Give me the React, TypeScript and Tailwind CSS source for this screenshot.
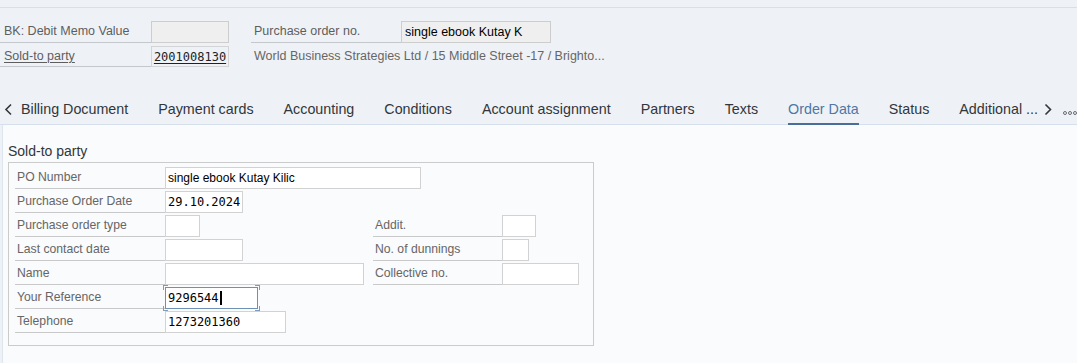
import React from "react";

const sans = { fontFamily: '"Liberation Sans", Arial, sans-serif' };
const mono = { fontFamily: '"DejaVu Sans Mono", "Liberation Mono", monospace' };

function HeaderLabel({ children, w, link, pl }: { children: React.ReactNode; w: string; link?: boolean; pl?: string }) {
  return (
    <div className={`${w} h-full border-b border-[#c4c8cc] flex items-center ${pl ?? "pl-[4px]"} text-[12.5px] text-[#5e5e5e] whitespace-nowrap`}>
      <span className={link ? "underline underline-offset-2" : ""}>{children}</span>
    </div>
  );
}

function FLabel({ children, w }: { children: React.ReactNode; w: string }) {
  return (
    <div className={`${w} h-full border-b border-[#c9c9c9] flex items-center pl-[2px] text-[12.2px] text-[#666666] whitespace-nowrap`}>
      {children}
    </div>
  );
}

function FInput({ w, children, isMono }: { w: string; children?: React.ReactNode; isMono?: boolean }) {
  return (
    <div
      className={`${w} h-full border border-[#d2d2d2] bg-white flex items-center px-[2px] text-[12px] text-black whitespace-nowrap overflow-hidden`}
      style={isMono ? mono : undefined}
    >
      {children}
    </div>
  );
}

function Corner({ cls }: { cls: string }) {
  return <span className={`absolute w-[5px] h-[5px] border-[#7e9bbb] ${cls}`} />;
}

const tabs = [
  "Billing Document",
  "Payment cards",
  "Accounting",
  "Conditions",
  "Account assignment",
  "Partners",
  "Texts",
  "Order Data",
  "Status",
  "Additional ...",
];

export default function App() {
  return (
    <div className="w-[1077px] h-[363px] overflow-hidden bg-[#eef2f7] flex flex-col" style={sans}>
      {/* top */}
      <div className="h-[7px]" />
      <div className="border-t border-[#d7dfe8] pt-[13px] pl-0">
        <div className="flex h-[22px]">
          <HeaderLabel w="w-[151px]">BK: Debit Memo Value</HeaderLabel>
          <div className="w-[78px] h-full border border-[#cdcdcd] bg-[#efefef]" />
          <div className="ml-[22px] flex h-full">
            <HeaderLabel w="w-[150px]" pl="pl-[3px]">Purchase order no.</HeaderLabel>
            <div className="w-[150px] h-full border border-[#cdcdcd] bg-[#efefef] flex items-center px-[3px] text-[12.5px] text-black">
              single ebook Kutay K
            </div>
          </div>
        </div>
        <div className="flex h-[21px] mt-[3px]">
          <HeaderLabel w="w-[151px]" link>Sold-to party</HeaderLabel>
          <div
            className="w-[78px] h-full border border-[#d4d4d4] bg-[#eef2f7] flex items-center justify-center text-[12px] text-[#222] underline underline-offset-2"
            style={mono}
          >
            2001008130
          </div>
          <div className="ml-[25px] flex items-center text-[12.5px] text-[#666666] whitespace-nowrap">
            World Business Strategies Ltd / 15 Middle Street -17 / Brighto...
          </div>
        </div>
      </div>

      {/* tabs */}
      <div className="mt-[28px] h-[30px] border-b border-[#d5e0ec] flex items-stretch text-[14.3px] text-[#32363a] whitespace-nowrap">
        <div className="w-[22px] flex items-center pl-[4px]">
          <svg width="9" height="13" viewBox="0 0 9 13">
            <polyline points="7,1.5 2,6.5 7,11.5" fill="none" stroke="#32363a" strokeWidth="1.6" />
          </svg>
        </div>
        <div className="flex items-stretch gap-[30px]">
          {tabs.map((t) =>
            t === "Order Data" ? (
              <div key={t} className="flex items-center border-b-2 border-[#4a6e9a] -mb-px pt-[1px] text-[#4f77a4]">
                {t}
              </div>
            ) : (
              <div key={t} className="flex items-center">
                {t}
              </div>
            )
          )}
        </div>
        <div className="flex items-center ml-[6px]">
          <svg width="8" height="13" viewBox="0 0 8 13">
            <polyline points="1.5,1.5 6.5,6.5 1.5,11.5" fill="none" stroke="#32363a" strokeWidth="1.6" />
          </svg>
        </div>
        <div className="flex items-center ml-[11px] pt-[6px] gap-[1px]">
          {[0, 1, 2].map((i) => (
            <span key={i} className="w-[4px] h-[4px] rounded-full border border-[#6a6d70]" />
          ))}
        </div>
      </div>

      {/* content */}
      <div className="flex-1 ml-[2px] border-l border-[#dde5ee] bg-[#f9fbfd] pt-[18px] pl-[5px]">
        <div className="h-[17px] flex items-center text-[14px] text-[#32363a]">Sold-to party</div>
        <div className="mt-[2px] w-[586px] h-[184px] border border-[#cbcbcb] pt-[4px] pl-[6px] flex flex-col gap-[2px]">
          <div className="flex h-[22px]">
            <FLabel w="w-[150px]">PO Number</FLabel>
            <FInput w="w-[256px]">single ebook Kutay Kilic</FInput>
          </div>
          <div className="flex h-[22px]">
            <FLabel w="w-[150px]">Purchase Order Date</FLabel>
            <FInput w="w-[78px]" isMono>29.10.2024</FInput>
          </div>
          <div className="flex h-[22px]">
            <div className="w-[358px] flex h-full">
              <FLabel w="w-[150px]">Purchase order type</FLabel>
              <FInput w="w-[35px]" />
            </div>
            <FLabel w="w-[129px]">Addit.</FLabel>
            <FInput w="w-[34px]" />
          </div>
          <div className="flex h-[22px]">
            <div className="w-[358px] flex h-full">
              <FLabel w="w-[150px]">Last contact date</FLabel>
              <FInput w="w-[78px]" />
            </div>
            <FLabel w="w-[129px]">No. of dunnings</FLabel>
            <FInput w="w-[27px]" />
          </div>
          <div className="flex h-[22px]">
            <div className="w-[358px] flex h-full">
              <FLabel w="w-[150px]">Name</FLabel>
              <FInput w="w-[199px]" />
            </div>
            <FLabel w="w-[129px]">Collective no.</FLabel>
            <FInput w="w-[77px]" />
          </div>
          <div className="flex h-[22px]">
            <FLabel w="w-[150px]">Your Reference</FLabel>
            <div className="relative w-[93px] h-full">
              <div
                className="w-full h-full border border-[#6f90b6] bg-white flex items-center px-[2px] text-[12px] text-black"
                style={mono}
              >
                9296544<span className="inline-block w-[2px] h-[14px] bg-black ml-[1px]" />
              </div>
              <Corner cls="-top-[2px] -left-[2px] border-t border-l" />
              <Corner cls="-top-[2px] -right-[2px] border-t border-r" />
              <Corner cls="-bottom-[2px] -left-[2px] border-b border-l" />
              <Corner cls="-bottom-[2px] -right-[2px] border-b border-r" />
            </div>
          </div>
          <div className="flex h-[22px]">
            <FLabel w="w-[150px]">Telephone</FLabel>
            <FInput w="w-[121px]" isMono>1273201360</FInput>
          </div>
        </div>
      </div>
    </div>
  );
}
